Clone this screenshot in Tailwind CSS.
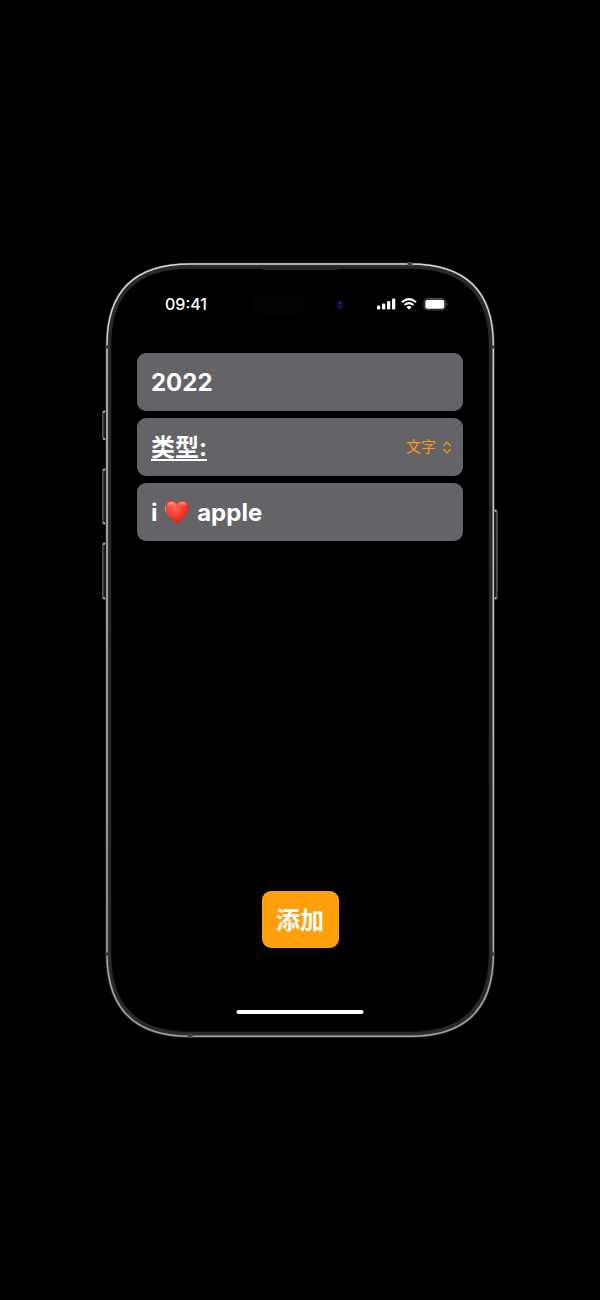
<!DOCTYPE html>
<html lang="zh-CN">
<head>
<meta charset="utf-8">
<meta name="viewport" content="width=device-width, initial-scale=1">
<title>添加</title>
<script src="https://cdn.jsdelivr.net/npm/@tailwindcss/browser@4"></script>
</head>
<body class="bg-black text-white font-['Inter','Noto_Sans_CJK_SC',sans-serif]">
<main class="flex min-h-screen items-center justify-center">
  <div class="relative flex aspect-[396/776] w-full max-w-[396px] flex-col px-[35px]">
    <!-- Device frame -->
    <svg class="pointer-events-none absolute inset-0 h-full w-full" viewBox="102 262 396 776" fill="none" aria-hidden="true">
      <defs>
        <linearGradient id="rim" x1="0" y1="262" x2="0" y2="1038" gradientUnits="userSpaceOnUse">
          <stop offset="0" stop-color="#d8d6d2"/><stop offset=".8" stop-color="#b5b3b0"/><stop offset="1" stop-color="#a5a3a0"/>
        </linearGradient>
      </defs>
      <path d="M109.500 345C109.500 294 136 267 190 267H410C464 267 490.500 294 490.500 345V954C490.500 1006 464 1033.500 410 1033.500H190C136 1033.500 109.500 1006 109.500 954Z" stroke="#2a2827" stroke-width="3.500"/>
      <path d="M107 345C107 292 134 264.300 190 264.300H410C466 264.300 493.300 292 493.300 345V954C493.300 1008 466 1036.300 410 1036.300H190C134 1036.300 107 1008 107 954Z" stroke="#3b3937" stroke-width="3"/>
      <path d="M107 345C107 292 134 264 190 264H410C466 264 493.300 292 493.300 345V954C493.300 1008 466 1036.300 410 1036.300H190C134 1036.300 107 1008 107 954Z" stroke="url(#rim)" stroke-width="1.400"/>
      <path d="M105 347h5M490 347h5M105 954h5M490 954h5" stroke="#333" stroke-width="3"/>
      <path d="M410 262v4M190 1034v4" stroke="#444" stroke-width="5"/>
      <path d="M261 268.500Q264 269.500 268 269.500H332Q337 269.500 340 268.500" stroke="#333130"/>
      <g stroke="#65625f" stroke-width="1.300" fill="#1c1b1a">
        <path d="M106 411H104.500Q102.800 411 102.800 413V437Q102.800 439 104.500 439H106"/>
        <path d="M106 469H104.500Q102.800 469 102.800 471V522Q102.800 524 104.500 524H106"/>
        <path d="M106 543H104.500Q102.800 543 102.800 545V597Q102.800 599 104.500 599H106"/>
        <path d="M494.500 510H495.500Q497 510 497 512V597Q497 599 495.500 599H494.500"/>
      </g>
      <g fill="#b5b2ae"><circle cx="104" cy="412" r="1"/><circle cx="104" cy="439" r="1"/><circle cx="104" cy="470" r="1"/><circle cx="104" cy="523" r="1"/><circle cx="104" cy="544" r="1"/><circle cx="104" cy="598" r="1"/><circle cx="495.500" cy="511" r="1"/><circle cx="495.500" cy="598" r="1"/></g>
      <rect x="252" y="295" width="54" height="19" rx="9" fill="#030303"/>
      <circle cx="340" cy="305" r="7" fill="#040309"/>
      <circle cx="340" cy="305" r="4.500" fill="#0b0928"/>
      <circle cx="340" cy="303" r="1.500" fill="#26228a"/><circle cx="340" cy="307" r="1.300" fill="#1e1a6c"/>
    </svg>

    <header class="mt-[30px] flex h-6 items-center justify-between pr-[14px] pl-7">
      <time class="text-base leading-6 font-medium">09:41</time>
      <svg class="h-4 w-[72px]" viewBox="377 296 72 16" fill="#fff" aria-label="信号、无线网络、电池">
        <rect x="377" y="305.500" width="3.300" height="4" rx="1.200"/>
        <rect x="382" y="303.500" width="3.300" height="6" rx="1.200"/>
        <rect x="387" y="301" width="3.300" height="8.500" rx="1.200"/>
        <rect x="392" y="298.500" width="3.300" height="11" rx="1.200"/>
        <g fill="none" stroke="#fff" stroke-width="2.100">
          <path d="M402 302.200Q409 296.200 416 302.200"/>
          <path d="M404.500 305Q409 301.300 413.500 305"/>
        </g>
        <path d="M409 309.700L406.400 307.100Q409 305 411.600 307.100Z"/>
        <rect x="424" y="298.500" width="21.500" height="11.500" rx="3.500" fill="none" stroke="#504f51"/>
        <rect x="425.300" y="299.800" width="19" height="9" rx="2.300"/>
        <path d="M447 302.500Q449 304.200 447 306Z" fill="#504f51"/>
      </svg>
    </header>

    <form class="mt-[37px] flex grow flex-col gap-[7px]">
      <input type="text" aria-label="标题" value="2022" class="h-[58px] w-full rounded-[9px] bg-[#646367] px-[14px] text-2xl font-bold outline-none">
      <div class="flex h-[58px] items-center justify-between rounded-[9px] bg-[#646367] pr-3 pl-[14px]">
        <label for="kind" class="pt-0.5 text-2xl font-bold underline decoration-2 underline-offset-3">类型:</label>
        <div class="flex items-center gap-[6px] text-[#f79b14]">
          <select id="kind" class="appearance-none bg-transparent pt-px text-[15px] outline-none"><option>文字</option></select>
          <svg class="h-[13px] w-2" viewBox="0 0 8 13" fill="none" stroke="currentColor" stroke-width="1.200" stroke-linecap="round" stroke-linejoin="round" aria-hidden="true"><path d="M.7 4.500L4 1.200L7.300 4.500M.7 8.500L4 11.800L7.300 8.500"/></svg>
        </div>
      </div>
      <div class="relative">
        <input type="text" aria-label="内容" value="i ❤︎&thinsp; apple" class="h-[58px] w-full rounded-[9px] bg-[#646367] px-[14px] text-2xl font-bold outline-none">
        <svg class="pointer-events-none absolute top-[17px] left-7 size-6" viewBox="0 0 24 24" aria-hidden="true">
          <defs>
            <radialGradient id="heart" cx=".4" cy=".3" r=".75"><stop offset="0" stop-color="#ff6a57"/><stop offset=".45" stop-color="#fb4132"/><stop offset=".8" stop-color="#e8271e"/><stop offset="1" stop-color="#c91a14"/></radialGradient>
            <linearGradient id="gloss" x1="0" y1="0" x2="0" y2="1"><stop offset="0" stop-color="#ffc0ae" stop-opacity=".85"/><stop offset="1" stop-color="#ff6a57" stop-opacity="0"/></linearGradient>
          </defs>
          <path d="M12 23.300C8.500 20.500.4 15 .4 7.600C.4 3.600 3.200 1 6.500 1C9 1 11 2.300 12 4.600C13 2.300 15 1 17.500 1C20.800 1 23.600 3.600 23.600 7.600C23.600 15 15.500 20.500 12 23.300Z" fill="url(#heart)"/>
          <ellipse cx="6.300" cy="4.700" rx="4" ry="2.800" fill="url(#gloss)"/><ellipse cx="17.700" cy="4.700" rx="4" ry="2.800" fill="url(#gloss)"/>
        </svg>
      </div>
      <button type="button" class="mx-auto mt-auto mb-[90px] h-[57px] w-[77px] rounded-[9px] bg-[#ff9f0c] pt-[3px] text-2xl font-bold">添加</button>
    </form>
    <div class="absolute bottom-6 left-1/2 h-1 w-[127px] -translate-x-1/2 rounded-full bg-white"></div>
  </div>
</main>
</body>
</html>
